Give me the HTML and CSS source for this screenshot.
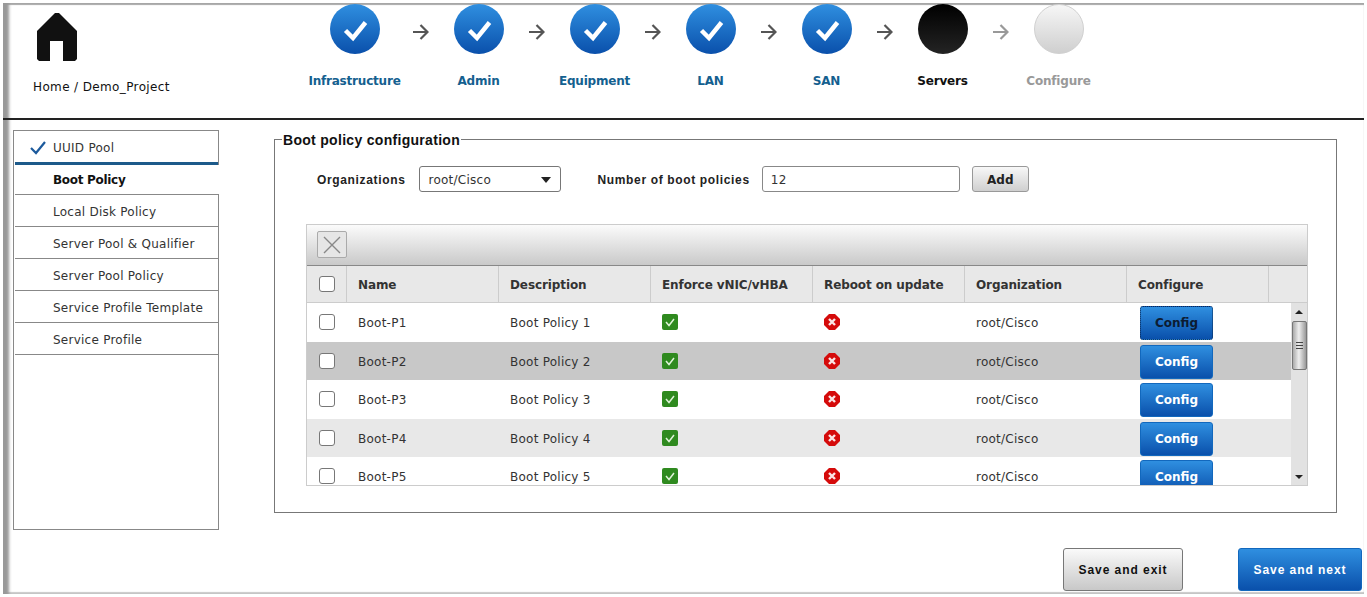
FILE: index.html
```html
<!DOCTYPE html>
<html lang="en">
<head>
    <meta charset="UTF-8">
    <title>Boot policy configuration</title>
    <link rel="stylesheet" href="styles.css">
</head>
<body>
    <svg class="defs" width="0" height="0">
        <symbol id="tick" viewBox="0 0 50 50"><path d="M15.5 26.5L23 34L35.5 18.500" fill="none" stroke="#fff" stroke-width="4.500"/></symbol>
        <symbol id="arrow" viewBox="0 0 16 16"><path d="M0 8H14.500M7.500 1L14.500 8L7.500 15" fill="none" stroke="currentColor" stroke-width="2.200"/></symbol>
        <symbol id="ok" viewBox="0 0 16 16"><rect width="16" height="16" rx="2" fill="#2f8a1f"/><path d="M4 8L7 11.500L12 5" fill="none" stroke="#dff3d8" stroke-width="1.500"/></symbol>
        <symbol id="no" viewBox="0 0 16 16"><path d="M5 0H11L16 5V11L11 16H5L0 11V5Z" fill="#d50b0b"/><path d="M5 5L11 11M11 5L5 11" fill="none" stroke="#fbe6e6" stroke-width="2.400"/></symbol>
    </svg>

    <div class="frame">
        <div class="header">
            <div class="brand">
                <svg class="home-icon" viewBox="0 0 40 48"><path d="M18 0H22L40 18V46L38 48H26V28H13V48H2L0 46V18Z" fill="#111"/></svg>
                <div class="crumb">Home / Demo_Project</div>
            </div>
            <div class="stepper">
                <div class="step step-wide done"><div class="circle"><svg><use href="#tick"/></svg></div><div class="step-label">Infrastructure</div></div>
                <svg class="step-arrow"><use href="#arrow"/></svg>
                <div class="step done"><div class="circle"><svg><use href="#tick"/></svg></div><div class="step-label">Admin</div></div>
                <svg class="step-arrow"><use href="#arrow"/></svg>
                <div class="step done"><div class="circle"><svg><use href="#tick"/></svg></div><div class="step-label">Equipment</div></div>
                <svg class="step-arrow"><use href="#arrow"/></svg>
                <div class="step done"><div class="circle"><svg><use href="#tick"/></svg></div><div class="step-label">LAN</div></div>
                <svg class="step-arrow"><use href="#arrow"/></svg>
                <div class="step done"><div class="circle"><svg><use href="#tick"/></svg></div><div class="step-label">SAN</div></div>
                <svg class="step-arrow"><use href="#arrow"/></svg>
                <div class="step current"><div class="circle"></div><div class="step-label">Servers</div></div>
                <svg class="step-arrow step-arrow-off"><use href="#arrow"/></svg>
                <div class="step todo"><div class="circle"></div><div class="step-label">Configure</div></div>
            </div>
        </div>

        <div class="content">
            <div class="sidebar">
                <div class="side-item side-done">
                    <svg class="side-tick" viewBox="0 0 16 14"><path d="M1 7L6 12L15 1" fill="none" stroke="#1c5a9c" stroke-width="2.200"/></svg>
                    UUID Pool
                </div>
                <div class="side-item side-active">Boot Policy</div>
                <div class="side-item">Local Disk Policy</div>
                <div class="side-item">Server Pool &amp; Qualifier</div>
                <div class="side-item">Server Pool Policy</div>
                <div class="side-item">Service Profile Template</div>
                <div class="side-item">Service Profile</div>
            </div>

            <fieldset class="panel">
                <legend>Boot policy configuration</legend>
                <div class="form-row">
                    <label class="form-label">Organizations</label>
                    <div class="select"><span>root/Cisco</span><span class="caret"></span></div>
                    <label class="form-label label-count">Number of boot policies</label>
                    <div class="text-input">12</div>
                    <button class="btn-add">Add</button>
                </div>

                <div class="grid-box">
                    <div class="toolbar">
                        <button class="btn-delete"><svg viewBox="0 0 20 20"><path d="M2 2L18 18M18 2L2 18" stroke="#888" stroke-width="1.400"/></svg></button>
                    </div>
                    <div class="row head-row">
                        <div class="cell"><span class="check"></span></div>
                        <div class="cell">Name</div>
                        <div class="cell">Description</div>
                        <div class="cell">Enforce vNIC/vHBA</div>
                        <div class="cell">Reboot on update</div>
                        <div class="cell">Organization</div>
                        <div class="cell">Configure</div>
                        <div class="cell"></div>
                    </div>
                    <div class="grid-body">
                        <div class="rows">
                            <div class="row">
                                <div class="cell"><span class="check"></span></div>
                                <div class="cell">Boot-P1</div>
                                <div class="cell">Boot Policy 1</div>
                                <div class="cell"><svg class="flag"><use href="#ok"/></svg></div>
                                <div class="cell"><svg class="flag"><use href="#no"/></svg></div>
                                <div class="cell">root/Cisco</div>
                                <div class="cell"><button class="btn-config focused">Config</button></div>
                            </div>
                            <div class="row row-selected">
                                <div class="cell"><span class="check"></span></div>
                                <div class="cell">Boot-P2</div>
                                <div class="cell">Boot Policy 2</div>
                                <div class="cell"><svg class="flag"><use href="#ok"/></svg></div>
                                <div class="cell"><svg class="flag"><use href="#no"/></svg></div>
                                <div class="cell">root/Cisco</div>
                                <div class="cell"><button class="btn-config">Config</button></div>
                            </div>
                            <div class="row">
                                <div class="cell"><span class="check"></span></div>
                                <div class="cell">Boot-P3</div>
                                <div class="cell">Boot Policy 3</div>
                                <div class="cell"><svg class="flag"><use href="#ok"/></svg></div>
                                <div class="cell"><svg class="flag"><use href="#no"/></svg></div>
                                <div class="cell">root/Cisco</div>
                                <div class="cell"><button class="btn-config">Config</button></div>
                            </div>
                            <div class="row row-alt">
                                <div class="cell"><span class="check"></span></div>
                                <div class="cell">Boot-P4</div>
                                <div class="cell">Boot Policy 4</div>
                                <div class="cell"><svg class="flag"><use href="#ok"/></svg></div>
                                <div class="cell"><svg class="flag"><use href="#no"/></svg></div>
                                <div class="cell">root/Cisco</div>
                                <div class="cell"><button class="btn-config">Config</button></div>
                            </div>
                            <div class="row">
                                <div class="cell"><span class="check"></span></div>
                                <div class="cell">Boot-P5</div>
                                <div class="cell">Boot Policy 5</div>
                                <div class="cell"><svg class="flag"><use href="#ok"/></svg></div>
                                <div class="cell"><svg class="flag"><use href="#no"/></svg></div>
                                <div class="cell">root/Cisco</div>
                                <div class="cell"><button class="btn-config">Config</button></div>
                            </div>
                        </div>
                        <div class="scrollbar">
                            <span class="scroll-up"></span>
                            <div class="scroll-thumb"><span class="grip"></span></div>
                            <span class="scroll-down"></span>
                        </div>
                    </div>
                </div>
            </fieldset>
        </div>

        <div class="footer">
            <button class="btn-exit">Save and exit</button>
            <button class="btn-next">Save and next</button>
        </div>
    </div>
</body>
</html>
```

FILE: styles.css
```css
body {
    margin: 0;
    background: #fff;
    color: #222;
    font-family: "DejaVu Sans", sans-serif;
    font-size: 12px;
    letter-spacing: 0.25px;
    overflow: hidden;
}

button {
    font-family: "DejaVu Sans", sans-serif;
    cursor: pointer;
}

.defs {
    position: absolute;
}

.frame {
    box-sizing: border-box;
    width: 1361px;
    height: 591px;
    margin: 3px 3px 3px 3px;
    box-shadow: inset 7px 0 3px -1px #999, inset 0 2px 1px #aaa, inset 0 -3px 1px -1px #ccc;
}

/* header */
.header {
    display: flex;
    box-sizing: border-box;
    height: 117px;
    padding-top: 1px;
    border-bottom: 2px solid #222;
}

.brand {
    width: 302px;
    padding: 9px 0 0 30px;
    box-sizing: border-box;
}

.home-icon {
    display: block;
    width: 40px;
    height: 48px;
    margin-left: 4px;
}

.crumb {
    margin-top: 19px;
    color: #111;
    letter-spacing: 0.37px;
    white-space: nowrap;
}

.stepper {
    display: flex;
    align-items: flex-start;
}

.step {
    width: 84px;
    display: flex;
    flex-direction: column;
    align-items: center;
}

.step-wide {
    width: 100px;
}

.circle {
    box-sizing: border-box;
    width: 50px;
    height: 50px;
    border-radius: 50%;
}

.circle svg {
    display: block;
    width: 50px;
    height: 50px;
}

.done .circle {
    background: linear-gradient(#2f8fe0, #0a50ab);
}

.current .circle {
    background: linear-gradient(#000, #242424);
}

.todo .circle {
    background: linear-gradient(#f6f6f6, #cfcfcf);
    border: 1px solid #d0d0d0;
}

.step-label {
    margin: 20px 1px 0 0;
    font-weight: bold;
    font-size: 12px;
    letter-spacing: -0.2px;
    white-space: nowrap;
}

.done .step-label {
    color: #14608f;
}

.current .step-label {
    color: #111;
}

.todo .step-label {
    color: #999;
}

.step-arrow {
    width: 16px;
    height: 16px;
    margin: 20px 8px 0 8px;
    color: #555;
}

.step-arrow-off {
    color: #999;
}

/* sidebar and main panel */
.content {
    display: flex;
    padding: 10px 0 0 10px;
}

.sidebar {
    box-sizing: border-box;
    width: 206px;
    height: 400px;
    border: 1px solid #888;
    flex-shrink: 0;
}

.side-item {
    box-sizing: border-box;
    display: flex;
    align-items: center;
    height: 32px;
    padding: 2px 0 0 38px;
    border-bottom: 1px solid #888;
    margin-left: 1px;
    color: #333;
    position: relative;
}

.side-done {
    height: 34px;
    border-bottom: 3px solid #1d5a8a;
}

.side-tick {
    position: absolute;
    left: 15px;
    top: 10px;
    width: 16px;
    height: 14px;
}

.side-active {
    height: 30px;
    padding-top: 0;
    font-weight: bold;
    letter-spacing: -0.3px;
    color: #111;
    background: #fff;
    margin-right: -1px;
}

.panel {
    box-sizing: border-box;
    width: 1063px;
    height: 383px;
    margin: 0 0 0 55px;
    padding: 18px 0 0 31px;
    border: 1px solid #777;
    min-width: 0;
}

.panel legend {
    padding: 2px 1px 0;
    margin-left: -24px;
    font-family: "Liberation Sans", sans-serif;
    font-weight: bold;
    font-size: 14px;
    letter-spacing: 0.3px;
    color: #111;
}

.form-row {
    display: flex;
    align-items: center;
    height: 26px;
    padding-left: 11px;
}

.form-label {
    margin-top: 2px;
    font-family: "Liberation Sans", sans-serif;
    font-weight: bold;
    font-size: 12px;
    letter-spacing: 0.65px;
    color: #222;
}

.select {
    box-sizing: border-box;
    display: flex;
    justify-content: space-between;
    align-items: center;
    width: 142px;
    height: 26px;
    margin-left: 14px;
    padding: 2px 9px 0 8px;
    border: 1px solid #777;
    border-radius: 3px;
    color: #333;
    font-size: 12px;
}

.caret {
    border-left: 5px solid transparent;
    border-right: 5px solid transparent;
    border-top: 6px solid #222;
}

.label-count {
    margin-left: 36px;
}

.text-input {
    box-sizing: border-box;
    display: flex;
    align-items: center;
    width: 198px;
    height: 26px;
    margin-left: 12px;
    padding: 2px 0 0 8px;
    border: 1px solid #888;
    border-radius: 3px;
    color: #333;
}

.btn-add {
    width: 57px;
    height: 26px;
    margin-left: 12px;
    padding: 2px 0 0;
    border: 1px solid #999;
    border-radius: 3px;
    background: linear-gradient(#f8f8f8, #cfcfcf);
    font-weight: bold;
    font-size: 12px;
    letter-spacing: 0;
    color: #222;
}

/* policy grid */
.grid-box {
    box-sizing: border-box;
    width: 1002px;
    margin-top: 32px;
    border: 1px solid #ccc;
}

.toolbar {
    box-sizing: border-box;
    height: 41px;
    padding: 6px 0 0 10px;
    background: linear-gradient(#fbfbfb, #c9c9c9);
    border-bottom: 1px solid #888;
}

.btn-delete {
    display: block;
    box-sizing: border-box;
    width: 30px;
    height: 27px;
    padding: 2px 4px;
    border: 1px solid #aaa;
    border-radius: 2px;
    background: #e6e6e6;
}

.btn-delete svg {
    display: block;
    width: 20px;
    height: 20px;
}

.row {
    display: grid;
    grid-template-columns: 40px 152px 152px 162px 152px 162px 142px;
    height: 38.5px;
}

.head-row {
    grid-template-columns: 40px 152px 152px 162px 152px 162px 142px 38px;
    height: 37px;
    box-sizing: border-box;
    background: #e8e8e8;
    border-bottom: 1px solid #ccc;
    font-weight: bold;
    letter-spacing: -0.1px;
    color: #333;
}

.head-row .cell {
    border-right: 1px solid #ccc;
}

.head-row .cell:last-child {
    border-right: none;
}

.cell {
    display: flex;
    align-items: center;
    padding: 2px 0 0 11px;
    white-space: nowrap;
    overflow: hidden;
}

.cell:first-child {
    padding-left: 12px;
}

.grid-body {
    display: flex;
    height: 182px;
    overflow: hidden;
}

.rows {
    width: 984px;
    flex-shrink: 0;
    color: #333;
}

.row-selected {
    background: #c8c8c8;
}

.row-alt {
    background: #e8e8e8;
}

.check {
    box-sizing: border-box;
    width: 16px;
    height: 16px;
    margin-top: -2px;
    border: 1px solid #777;
    border-radius: 3px;
    background: #fff;
}

.flag {
    width: 16px;
    height: 16px;
    margin-top: -2px;
}

.btn-config {
    box-sizing: border-box;
    width: 73px;
    height: 34px;
    margin-left: 2px;
    padding: 0;
    border: 1px solid #1268bd;
    border-radius: 3px;
    background: linear-gradient(#2f8fe0, #0a50ab);
    color: #fff;
    font-weight: bold;
    font-size: 12px;
    letter-spacing: 0;
}

.focused {
    border: 1px dotted #0a2a55;
    color: #0c1c33;
}

.scrollbar {
    flex: 1;
    display: flex;
    flex-direction: column;
    align-items: center;
    background: #e2e2e2;
}

.scroll-up {
    margin-top: 7px;
    border-left: 4px solid transparent;
    border-right: 4px solid transparent;
    border-bottom: 4px solid #222;
}

.scroll-thumb {
    box-sizing: border-box;
    display: flex;
    justify-content: center;
    align-items: center;
    width: 15px;
    height: 49px;
    margin-top: 7px;
    border: 1px solid #777;
    border-radius: 2px;
    background: linear-gradient(90deg, #aaa, #eee 45%, #999);
}

.grip {
    width: 7px;
    height: 7px;
    background: repeating-linear-gradient(#444 0 1px, transparent 1px 3px);
}

.scroll-down {
    margin-top: auto;
    margin-bottom: 6px;
    border-left: 4px solid transparent;
    border-right: 4px solid transparent;
    border-top: 4px solid #222;
}

/* bottom buttons */
.footer {
    display: flex;
    justify-content: flex-end;
    gap: 55px;
    margin-top: 18px;
    padding-right: 2px;
}

.btn-exit, .btn-next {
    box-sizing: border-box;
    height: 43px;
    padding: 0;
    border-radius: 3px;
    font-family: "Liberation Sans", sans-serif;
    font-weight: bold;
    font-size: 12px;
    letter-spacing: 0.95px;
}

.btn-exit {
    width: 120px;
    border: 1px solid #777;
    background: linear-gradient(#fafafa, #c8c8c8);
    color: #111;
}

.btn-next {
    width: 124px;
    border: 1px solid #1268bd;
    background: linear-gradient(#2f8fe0, #0a50ab);
    color: #fff;
}
```
